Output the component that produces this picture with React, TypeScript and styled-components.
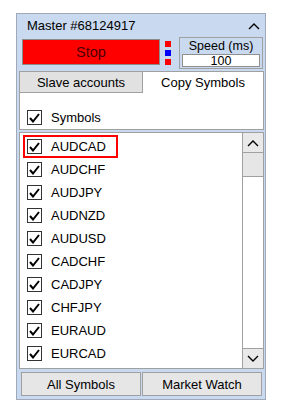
import * as React from 'react'
import styled, { createGlobalStyle } from 'styled-components'

const GlobalStyle = createGlobalStyle`
  html, body {
    margin: 0;
    padding: 0;
    background: #ffffff;
  }
  * {
    box-sizing: border-box;
  }
  body {
    font-family: "Liberation Sans", Arial, sans-serif;
    color: #000000;
  }
`

const symbols = [
  'AUDCAD',
  'AUDCHF',
  'AUDJPY',
  'AUDNZD',
  'AUDUSD',
  'CADCHF',
  'CADJPY',
  'CHFJPY',
  'EURAUD',
  'EURCAD'
]

const grayBorder = '#a0a0a0'

const Panel = styled.div`
  margin: 13px 0 0 16px;
  width: 250px;
  height: 387px;
  border: 1px solid #9fa9b9;
  background: #c9d9ef;
  display: flex;
  flex-direction: column;
`

const Header = styled.div`
  height: 23px;
  display: flex;
  align-items: center;
  justify-content: space-between;
  padding: 0 5px 0 10px;
  font-size: 13px;
`

const ControlsRow = styled.div`
  height: 32px;
  display: flex;
  padding-left: 5px;
`

const StopButton = styled.button`
  margin-top: 2px;
  width: 138px;
  height: 26px;
  border: 1px solid #8c8c8c;
  background: #ff0000;
  color: #4a0000;
  font-family: "Liberation Sans", Arial, sans-serif;
  font-size: 14.5px;
  padding: 0;
`

const Indicators = styled.div`
  margin: 4px 8px 0 5px;
  width: 6px;
  display: flex;
  flex-direction: column;
  gap: 3px;
`

const Dot = styled.span<{ color: string }>`
  display: block;
  width: 6px;
  height: 6px;
  background: ${p => p.color};
`

const SpeedBox = styled.div`
  width: 84px;
  height: 32px;
  border: 1px solid ${grayBorder};
  display: flex;
  flex-direction: column;
  align-items: center;
  padding: 0 2px;
  font-size: 12.5px;
`

const SpeedLabel = styled.div`
  height: 16px;
  line-height: 16px;
`

const SpeedInput = styled.div`
  width: 100%;
  height: 13px;
  line-height: 12px;
  background: #ffffff;
  border: 1px solid #8f8f8f;
  text-align: center;
  font-size: 12.5px;
`

const Tabs = styled.div`
  margin: 2px 1px 0 2px;
  height: 59px;
  display: flex;
  flex-direction: column;
  border: 1px solid ${grayBorder};
  background: #ffffff;
`

const TabStrip = styled.div`
  height: 21px;
  display: flex;
`

const Tab = styled.div<{ active?: boolean }>`
  flex: ${p => (p.active ? '1' : '0 0 123px')};
  display: flex;
  align-items: center;
  justify-content: center;
  font-size: 13px;
  background: ${p => (p.active ? '#ffffff' : '#e1e1e1')};
  border-bottom: ${p => (p.active ? 'none' : `1px solid ${grayBorder}`)};
  border-right: ${p => (p.active ? 'none' : `1px solid ${grayBorder}`)};
`

const TabContent = styled.div`
  flex: 1;
  display: flex;
  align-items: flex-end;
  padding: 0 0 4px 7px;
`

const CheckRow = styled.div<{ focused?: boolean }>`
  height: 23px;
  display: flex;
  align-items: center;
  gap: 9px;
  font-size: 13px;
  padding-left: 2px;
  width: 95px;
  border: 2px solid ${p => (p.focused ? '#ff0000' : 'transparent')};
`

const Box = styled.span`
  width: 15px;
  height: 15px;
  border: 1px solid #333333;
  background: #ffffff;
  display: flex;
  align-items: center;
  justify-content: center;
`

const SymbolsCheck = styled.div`
  display: flex;
  align-items: center;
  gap: 9px;
  font-size: 13px;
`

const List = styled.div`
  margin: 2px 1px 0 2px;
  height: 237px;
  display: flex;
  border: 1px solid ${grayBorder};
  background: #ffffff;
`

const Rows = styled.div`
  flex: 1;
  padding: 2px 0 0 3px;
  overflow: hidden;
`

const ScrollBar = styled.div`
  width: 21px;
  display: flex;
  flex-direction: column;
  border-left: 1px solid ${grayBorder};
`

const ScrollButton = styled.div`
  height: 20px;
  display: flex;
  align-items: center;
  justify-content: center;
  background: #e9e9e9;
  border-top: 1px solid ${grayBorder};
  border-bottom: 1px solid ${grayBorder};
  &:first-child {
    border-top: none;
  }
  &:last-child {
    border-bottom: none;
  }
`

const Thumb = styled.div`
  height: 24px;
  background: #e6e6e6;
  border-bottom: 1px solid ${grayBorder};
`

const Track = styled.div`
  flex: 1;
`

const Footer = styled.div`
  margin: 3px 3px 0 4px;
  display: flex;
  gap: 1px;
`

const FooterButton = styled.button`
  flex: 1;
  height: 24px;
  border: 1px solid ${grayBorder};
  background: #e6e6e6;
  font-family: "Liberation Sans", Arial, sans-serif;
  font-size: 13px;
  color: #000000;
  padding: 0;
`

const Check = () => (
  <svg width="11" height="10" viewBox="0 0 11 10">
    <path d="M1 5 L4 8.5 L10 1" fill="none" stroke="#000" strokeWidth="2" />
  </svg>
)

const Chevron: React.FC<{ up?: boolean }> = ({ up }) => (
  <svg width="12" height="8" viewBox="0 0 12 8">
    <path
      d={up ? 'M1 7 L6 2 L11 7' : 'M1 1 L6 6 L11 1'}
      fill="none"
      stroke="#000"
      strokeWidth="1.4"
    />
  </svg>
)

export default function App() {
  return (
    <>
      <GlobalStyle />
      <Panel>
        <Header>
          <span>Master #68124917</span>
          <Chevron up />
        </Header>
        <ControlsRow>
          <StopButton type="button">Stop</StopButton>
          <Indicators>
            <Dot color="#ff0000" />
            <Dot color="#0000ff" />
            <Dot color="#ff0000" />
          </Indicators>
          <SpeedBox>
            <SpeedLabel>Speed (ms)</SpeedLabel>
            <SpeedInput>100</SpeedInput>
          </SpeedBox>
        </ControlsRow>
        <Tabs>
          <TabStrip>
            <Tab>Slave accounts</Tab>
            <Tab active>Copy Symbols</Tab>
          </TabStrip>
          <TabContent>
            <SymbolsCheck>
              <Box>
                <Check />
              </Box>
              Symbols
            </SymbolsCheck>
          </TabContent>
        </Tabs>
        <List>
          <Rows>
            {symbols.map((s, i) => (
              <CheckRow key={s} focused={i === 0}>
                <Box>
                  <Check />
                </Box>
                {s}
              </CheckRow>
            ))}
          </Rows>
          <ScrollBar>
            <ScrollButton>
              <Chevron up />
            </ScrollButton>
            <Thumb />
            <Track />
            <ScrollButton>
              <Chevron />
            </ScrollButton>
          </ScrollBar>
        </List>
        <Footer>
          <FooterButton type="button">All Symbols</FooterButton>
          <FooterButton type="button">Market Watch</FooterButton>
        </Footer>
      </Panel>
    </>
  )
}
